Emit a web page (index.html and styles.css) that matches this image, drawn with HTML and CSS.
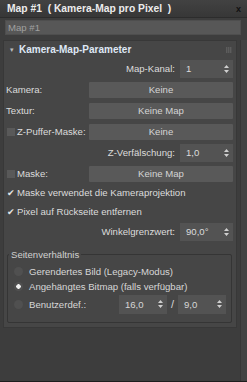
FILE: index.html
```html
<!DOCTYPE html>
<html lang="de">
<head>
    <meta charset="UTF-8">
    <title>Map #1 (Kamera-Map pro Pixel)</title>
    <link rel="stylesheet" href="styles.css">
</head>
<body>
    <div class="window">
        <div class="titlebar">
            <span class="title">Map #1&nbsp;&nbsp;( Kamera-Map pro Pixel&nbsp;&nbsp;)</span>
            <span class="close">x</span>
        </div>

        <div class="namebar">
            <div class="namefield">Map #1</div>
        </div>

        <div class="content">
            <div class="rollouts">
                <div class="rollout">
                    <div class="rollout-head">
                        <span class="arrow">&#9662;</span>
                        <span class="rollout-title">Kamera-Map-Parameter</span>
                        <span class="grip"></span>
                    </div>

                    <div class="row right">
                        <span class="label">Map-Kanal:</span>
                        <div class="spinner wide"><span>1</span><svg class="arrows" width="5" height="8" viewBox="0 0 5 8"><path d="M2.5 0L5 3H0Z M0 5H5L2.5 8Z"/></svg></div>
                    </div>

                    <div class="row">
                        <span class="label">Kamera:</span>
                        <div class="mapbtn">Keine</div>
                    </div>

                    <div class="row">
                        <span class="label">Textur:</span>
                        <div class="mapbtn">Keine Map</div>
                    </div>

                    <div class="row">
                        <span class="label"><span class="check"></span>Z-Puffer-Maske:</span>
                        <div class="mapbtn">Keine</div>
                    </div>

                    <div class="row right">
                        <span class="label">Z-Verfälschung:</span>
                        <div class="spinner wide"><span>1,0</span><svg class="arrows" width="5" height="8" viewBox="0 0 5 8"><path d="M2.5 0L5 3H0Z M0 5H5L2.5 8Z"/></svg></div>
                    </div>

                    <div class="row">
                        <span class="label"><span class="check"></span>Maske:</span>
                        <div class="mapbtn">Keine Map</div>
                    </div>

                    <div class="options">
                        <div class="option"><span class="check on">&#10004;</span>Maske verwendet die Kameraprojektion</div>
                        <div class="option"><span class="check on">&#10004;</span>Pixel auf Rückseite entfernen</div>
                    </div>

                    <div class="row right">
                        <span class="label">Winkelgrenzwert:</span>
                        <div class="spinner wide"><span>90,0°</span><svg class="arrows" width="5" height="8" viewBox="0 0 5 8"><path d="M2.5 0L5 3H0Z M0 5H5L2.5 8Z"/></svg></div>
                    </div>

                    <fieldset class="group">
                        <legend>Seitenverhältnis</legend>
                        <div class="radio"><span class="dot"></span>Gerendertes Bild (Legacy-Modus)</div>
                        <div class="radio"><span class="dot on"></span>Angehängtes Bitmap (falls verfügbar)</div>
                        <div class="radio custom">
                            <span class="dot"></span>Benutzerdef.:
                            <div class="ratio">
                                <div class="spinner"><span>16,0</span><svg class="arrows" width="5" height="8" viewBox="0 0 5 8"><path d="M2.5 0L5 3H0Z M0 5H5L2.5 8Z"/></svg></div>
                                <span class="slash">/</span>
                                <div class="spinner"><span>9,0</span><svg class="arrows" width="5" height="8" viewBox="0 0 5 8"><path d="M2.5 0L5 3H0Z M0 5H5L2.5 8Z"/></svg></div>
                            </div>
                        </div>
                    </fieldset>
                </div>
            </div>
            <div class="scrollbar"></div>
        </div>
    </div>
</body>
</html>
```

FILE: styles.css
```css
body {
    margin: 0;
    background-color: #3d3d3d;
    font-family: "Liberation Sans", Arial, sans-serif;
    font-size: 9.6px;
    color: #dcdcdc;
}
.window {
    width: 247px;
    height: 382px;
    box-sizing: border-box;
    background-color: #3d3d3d;
    border-bottom: 1px solid #1e1e1e;
    display: flex;
    flex-direction: column;
}
.titlebar {
    height: 17px;
    display: flex;
    align-items: center;
    justify-content: space-between;
    padding: 0 6px 0 7px;
    background: linear-gradient(#424242, #373737);
    border-bottom: 1px solid #2c2c2c;
}
.title {
    font-weight: bold;
    font-size: 10.3px;
    color: #ececec;
}
.close {
    font-weight: bold;
    font-size: 9px;
    color: #111;
}
.namebar {
    padding: 2px 6px 5px 5px;
}
.namefield {
    height: 13px;
    line-height: 13px;
    padding-left: 2px;
    background-color: #575757;
    border: 1px solid #4e4e4e;
    color: #a0a0a0;
}
.content {
    flex: 1;
    display: flex;
}
.rollouts {
    flex: 1;
    padding-left: 3px;
}
.scrollbar {
    width: 6px;
    margin-left: 3px;
    border-left: 1px solid #363636;
    background-color: #424242;
}
.rollout {
    background-color: #464646;
    border: 1px solid #383838;
    padding: 0 3px 4px 2px;
}
.rollout-head {
    height: 17px;
    display: flex;
    align-items: center;
    gap: 5px;
    padding-left: 4px;
}
.arrow {
    font-size: 7px;
    color: #bcbcbc;
}
.rollout-title {
    flex: 1;
    font-weight: bold;
    font-size: 10px;
    color: #dfe8f5;
}
.grip {
    width: 6px;
    height: 6px;
    margin-right: 1px;
    background:
        repeating-linear-gradient(90deg, #5c5c5c 0 1px, transparent 1px 2px),
        #4f4f4f;
}
.row {
    display: flex;
    align-items: center;
    justify-content: space-between;
    height: 21px;
}
.row.right {
    justify-content: flex-end;
    gap: 5px;
}
.label {
    display: flex;
    align-items: center;
    white-space: nowrap;
}
.mapbtn {
    width: 144px;
    height: 16px;
    line-height: 16px;
    text-align: center;
    background-color: #595959;
    border-radius: 1px;
    color: #d4d4d4;
}
.spinner {
    height: 18px;
    display: flex;
    align-items: center;
    justify-content: space-between;
    padding: 0 4px 0 6px;
    background-color: #535353;
    box-sizing: border-box;
}
.spinner.wide {
    width: 53px;
}
.arrows {
    fill: #cfcfcf;
}
.check {
    display: inline-flex;
    align-items: center;
    justify-content: center;
    width: 8px;
    height: 8px;
    margin: 0 2px 0 1px;
    background-color: #595959;
    font-size: 8.5px;
    color: #e4e4e4;
}
.check.on {
    background-color: transparent;
}
.options {
    margin-top: -1px;
}
.option {
    display: flex;
    align-items: center;
    height: 19px;
}
.group {
    margin: 7px 1px 0 1px;
    padding: 4px 5px 8px 6px;
    border: 1px solid #353535;
    border-radius: 2px;
}
.group legend {
    padding: 0 2px;
    margin-left: -5px;
    color: #d0d0d0;
}
.radio {
    display: flex;
    align-items: center;
    height: 15px;
    color: #d6d6d6;
}
.dot {
    width: 9px;
    height: 9px;
    margin-right: 6px;
    border-radius: 50%;
    background-color: #505050;
}
.dot.on {
    background: radial-gradient(circle, #f0f0f0 0 2px, #505050 2.5px);
}
.radio.custom {
    height: 20px;
}
.ratio {
    margin-left: auto;
    display: flex;
    align-items: center;
    gap: 4px;
}
.ratio .spinner {
    width: 48px;
    height: 19px;
}
.slash {
    font-size: 11px;
}
```
